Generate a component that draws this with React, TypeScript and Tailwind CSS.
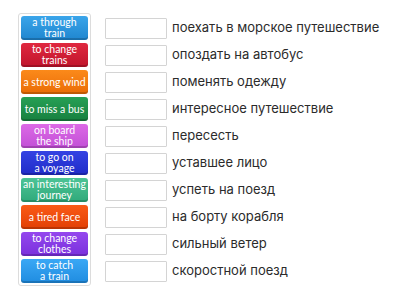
const tiles = [
  { text: "a through train", lines: ["a through", "train"], from: "from-[#3aa5ea]", to: "to-[#1f86cf]" },
  { text: "to change trains", lines: ["to change", "trains"], from: "from-[#e0283f]", to: "to-[#c0142c]" },
  { text: "a strong wind", lines: ["a strong wind"], from: "from-[#fb8a1a]", to: "to-[#ea6c05]" },
  { text: "to miss a bus", lines: ["to miss a bus"], from: "from-[#27a055]", to: "to-[#17803f]" },
  { text: "on board the ship", lines: ["on board", "the ship"], from: "from-[#dc6ae6]", to: "to-[#c24fd6]" },
  { text: "to go on a voyage", lines: ["to go on", "a voyage"], from: "from-[#3442e3]", to: "to-[#1f2cc8]" },
  { text: "an interesting journey", lines: ["an interesting", "journey"], from: "from-[#4cc496]", to: "to-[#2fa97a]" },
  { text: "a tired face", lines: ["a tired face"], from: "from-[#fa5a16]", to: "to-[#e23f05]" },
  { text: "to change clothes", lines: ["to change", "clothes"], from: "from-[#9447ee]", to: "to-[#7a2fdc]" },
  { text: "to catch a train", lines: ["to catch", "a train"], from: "from-[#3aa8f5]", to: "to-[#1f8ce0]" },
];

const answers = [
  "поехать в морское путешествие",
  "опоздать на автобус",
  "поменять одежду",
  "интересное путешествие",
  "пересесть",
  "уставшее лицо",
  "успеть на поезд",
  "на борту корабля",
  "сильный ветер",
  "скоростной поезд",
];

export default function App() {
  return (
    <div className="w-[400px] h-[300px] bg-white flex items-start pt-[13px] pl-[18px] gap-[14px] overflow-hidden">
      {/* Draggable tiles */}
      <div className="w-[73px] border border-[#dcdcdc] rounded-[3px] p-[2px] flex flex-col gap-[3px]">
        {tiles.map((t) => (
          <div
            key={t.text}
            className={`h-[24px] rounded-[3px] bg-gradient-to-b ${t.from} ${t.to} shadow-[inset_0_-2px_0_rgba(0,0,0,0.18)] flex flex-col items-center justify-center text-white text-[10.5px] leading-[11px] font-['Lato',sans-serif] text-center`}
          >
            {t.lines.map((l) => (
              <span key={l} className="whitespace-nowrap">
                {l}
              </span>
            ))}
          </div>
        ))}
      </div>

      {/* Targets */}
      <div className="flex flex-col gap-[3px] pt-[3px]">
        {answers.map((a) => (
          <div key={a} className="h-[24px] flex items-center gap-[5px]">
            <div className="w-[62px] h-[21px] border border-[#d4d4d4] bg-white rounded-[1px]" />
            <span className="text-[13px] text-[#2b2b2b] font-['Inter',sans-serif] whitespace-nowrap">{a}</span>
          </div>
        ))}
      </div>
    </div>
  );
}
